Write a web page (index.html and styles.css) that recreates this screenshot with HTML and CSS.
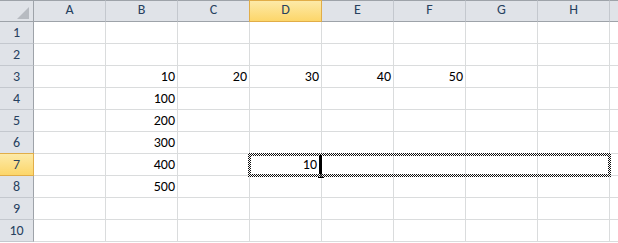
FILE: index.html
```html
<!DOCTYPE html>
<html lang="en">
<head>
    <meta charset="UTF-8">
    <meta name="viewport" content="width=device-width, initial-scale=1.0">
    <title>Sheet1</title>
    <link rel="stylesheet" href="styles.css">
</head>
<body>
    <div class="sheet">
        <!-- column headers -->
        <div class="corner"><span class="select-all"></span></div>
        <div class="col-head">A</div>
        <div class="col-head">B</div>
        <div class="col-head">C</div>
        <div class="col-head active">D</div>
        <div class="col-head">E</div>
        <div class="col-head">F</div>
        <div class="col-head">G</div>
        <div class="col-head">H</div>
        <div class="col-head last"></div>

        <div class="row-head">1</div>
        <div class="cell"></div><div class="cell"></div><div class="cell"></div><div class="cell"></div><div class="cell"></div><div class="cell"></div><div class="cell"></div><div class="cell"></div><div class="cell last"></div>

        <div class="row-head">2</div>
        <div class="cell"></div><div class="cell"></div><div class="cell"></div><div class="cell"></div><div class="cell"></div><div class="cell"></div><div class="cell"></div><div class="cell"></div><div class="cell last"></div>

        <div class="row-head">3</div>
        <div class="cell"></div><div class="cell">10</div><div class="cell">20</div><div class="cell">30</div><div class="cell">40</div><div class="cell">50</div><div class="cell"></div><div class="cell"></div><div class="cell last"></div>

        <div class="row-head">4</div>
        <div class="cell"></div><div class="cell">100</div><div class="cell"></div><div class="cell"></div><div class="cell"></div><div class="cell"></div><div class="cell"></div><div class="cell"></div><div class="cell last"></div>

        <div class="row-head">5</div>
        <div class="cell"></div><div class="cell">200</div><div class="cell"></div><div class="cell"></div><div class="cell"></div><div class="cell"></div><div class="cell"></div><div class="cell"></div><div class="cell last"></div>

        <div class="row-head">6</div>
        <div class="cell"></div><div class="cell">300</div><div class="cell"></div><div class="cell"></div><div class="cell"></div><div class="cell"></div><div class="cell"></div><div class="cell"></div><div class="cell last"></div>

        <div class="row-head active">7</div>
        <div class="cell"></div><div class="cell">400</div><div class="cell"></div><div class="cell editing">10</div><div class="cell"></div><div class="cell"></div><div class="cell"></div><div class="cell"></div><div class="cell last"></div>

        <div class="row-head">8</div>
        <div class="cell"></div><div class="cell">500</div><div class="cell"></div><div class="cell"></div><div class="cell"></div><div class="cell"></div><div class="cell"></div><div class="cell"></div><div class="cell last"></div>

        <div class="row-head">9</div>
        <div class="cell"></div><div class="cell"></div><div class="cell"></div><div class="cell"></div><div class="cell"></div><div class="cell"></div><div class="cell"></div><div class="cell"></div><div class="cell last"></div>

        <div class="row-head">10</div>
        <div class="cell"></div><div class="cell"></div><div class="cell"></div><div class="cell"></div><div class="cell"></div><div class="cell"></div><div class="cell"></div><div class="cell"></div><div class="cell last"></div>

        <!-- copy range D7:H7 and edit caret -->
        <div class="marquee"></div>
        <div class="caret"></div>
        <svg class="ibeam" width="8" height="6" viewBox="0 0 8 6">
            <path d="M4 0V5M1 5.5H7" stroke="#000" stroke-width="1" fill="none"/>
        </svg>
    </div>
</body>
</html>
```

FILE: styles.css
```css
body {
    margin: 0;
    background-color: #fff;
    overflow: hidden;
    font-family: Calibri, Carlito, "Open Sans", sans-serif;
}

.sheet {
    position: relative;
    display: grid;
    grid-template-columns: 34px repeat(8, 72px) 1fr;
    grid-auto-rows: 22px;
    width: 618px;
}

.sheet > div {
    box-sizing: border-box;
}

.corner,
.col-head {
    background-color: #e0e3e8;
    border-top: 1px solid #9ea3a9;
    border-bottom: 1px solid #9ea3a9;
    border-right: 1px solid #c4c8ce;
}

.corner {
    position: relative;
    border-right-color: #9ea3a9;
}

.select-all {
    position: absolute;
    left: 17px;
    top: 6px;
    width: 0;
    height: 0;
    border-left: 12px solid transparent;
    border-bottom: 12px solid #b7bbc1;
}

.col-head {
    display: flex;
    justify-content: center;
    align-items: flex-end;
    padding-bottom: 3px;
    font-size: 14px;
    line-height: 16px;
    color: #27415f;
}

.col-head.last {
    border-right: none;
}

.row-head {
    display: flex;
    justify-content: center;
    align-items: flex-end;
    padding-bottom: 2px;
    background-color: #e0e3e8;
    border-right: 1px solid #9ea3a9;
    border-bottom: 1px solid #c4c8ce;
    font-size: 14px;
    line-height: 16px;
    color: #27415f;
}

.col-head.active,
.row-head.active {
    background: linear-gradient(#fdeaa8, #fcd66a);
    border-color: #e1ad48;
}

.col-head.active {
    box-shadow: -1px 0 0 #e1ad48;
}

.row-head.active {
    box-shadow: 0 -1px 0 #e1ad48;
}

.cell {
    display: flex;
    justify-content: flex-end;
    align-items: flex-end;
    padding: 0 2px 2px 0;
    border-right: 1px solid #dadcdd;
    border-bottom: 1px solid #dadcdd;
    font-size: 14px;
    line-height: 16px;
    color: #000;
}

.cell.last {
    border-right: none;
}

.cell.editing {
    padding-right: 4px;
}

.marquee {
    position: absolute;
    left: 248px;
    top: 153px;
    width: 363px;
    height: 24px;
    padding: 3px;
    background: conic-gradient(#111 25%, #fff 0 50%, #111 0 75%, #fff 0) 0 0 / 2px 2px;
    -webkit-mask: linear-gradient(#000 0 0) content-box, linear-gradient(#000 0 0);
    -webkit-mask-composite: xor;
    mask-composite: exclude;
}

.caret {
    position: absolute;
    left: 319px;
    top: 155px;
    width: 3px;
    height: 19px;
    background-color: #000;
}

.ibeam {
    position: absolute;
    left: 317px;
    top: 172px;
}
```
